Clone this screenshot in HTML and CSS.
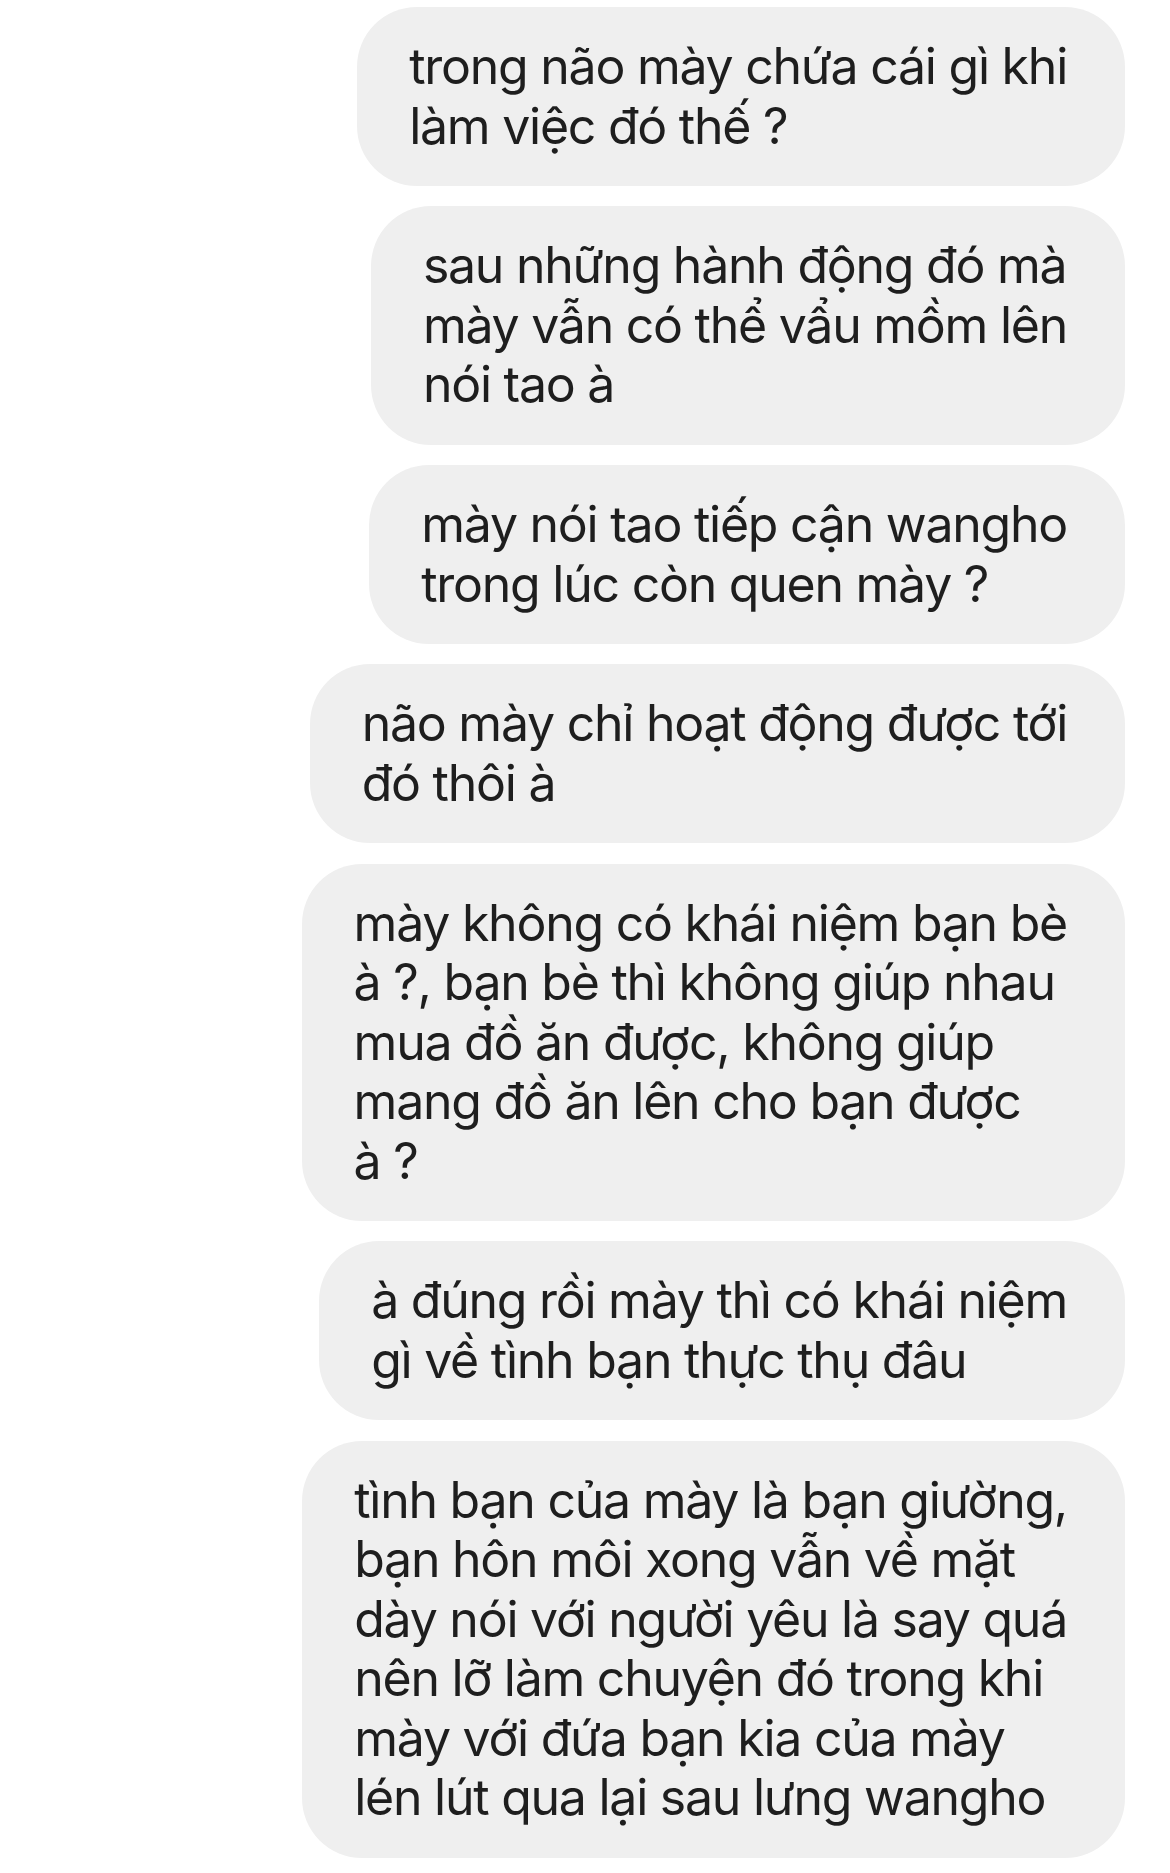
FILE: index.html
```html
<!DOCTYPE html>
<html lang="vi">
<head>
<meta charset="utf-8">
<title>Tin nhắn</title>
<link rel="stylesheet" href="styles.css">
</head>
<body>
<main class="chat">
  <div class="bubble">trong não mày chứa cái gì khi<br>làm việc đó thế ?</div>
  <div class="bubble">sau những hành động đó mà<br>mày vẫn có thể vẩu mồm lên<br>nói tao à</div>
  <div class="bubble">mày nói tao tiếp cận wangho<br>trong lúc còn quen mày ?</div>
  <div class="bubble">não mày chỉ hoạt động được tới<br>đó thôi à</div>
  <div class="bubble">mày không có khái niệm bạn bè<br>à ?, bạn bè thì không giúp nhau<br>mua đồ ăn được, không giúp<br>mang đồ ăn lên cho bạn được<br>à ?</div>
  <div class="bubble">à đúng rồi mày thì có khái niệm<br>gì về tình bạn thực thụ đâu</div>
  <div class="bubble">tình bạn của mày là bạn giường,<br>bạn hôn môi xong vẫn về mặt<br>dày nói với người yêu là say quá<br>nên lỡ làm chuyện đó trong khi<br>mày với đứa bạn kia của mày<br>lén lút qua lại sau lưng wangho</div>
</main>
</body>
</html>
```
FILE: styles.css
```css
html, body {
  margin: 0;
  padding: 0;
  background: #ffffff;
}

.chat {
  display: flex;
  flex-direction: column;
  align-items: flex-end;
  gap: 20.3px;
  padding: 7px 45px 16px 0;
}

.bubble {
  background: #efefef;
  color: #1e1e1e;
  font-family: Inter, "Noto Sans", "Liberation Sans", sans-serif;
  font-size: 50px;
  letter-spacing: -1.25px;
  line-height: 59.5px;
  padding: 30px 58px 30px 52px;
  border-radius: 60px;
  white-space: nowrap;
}
```
